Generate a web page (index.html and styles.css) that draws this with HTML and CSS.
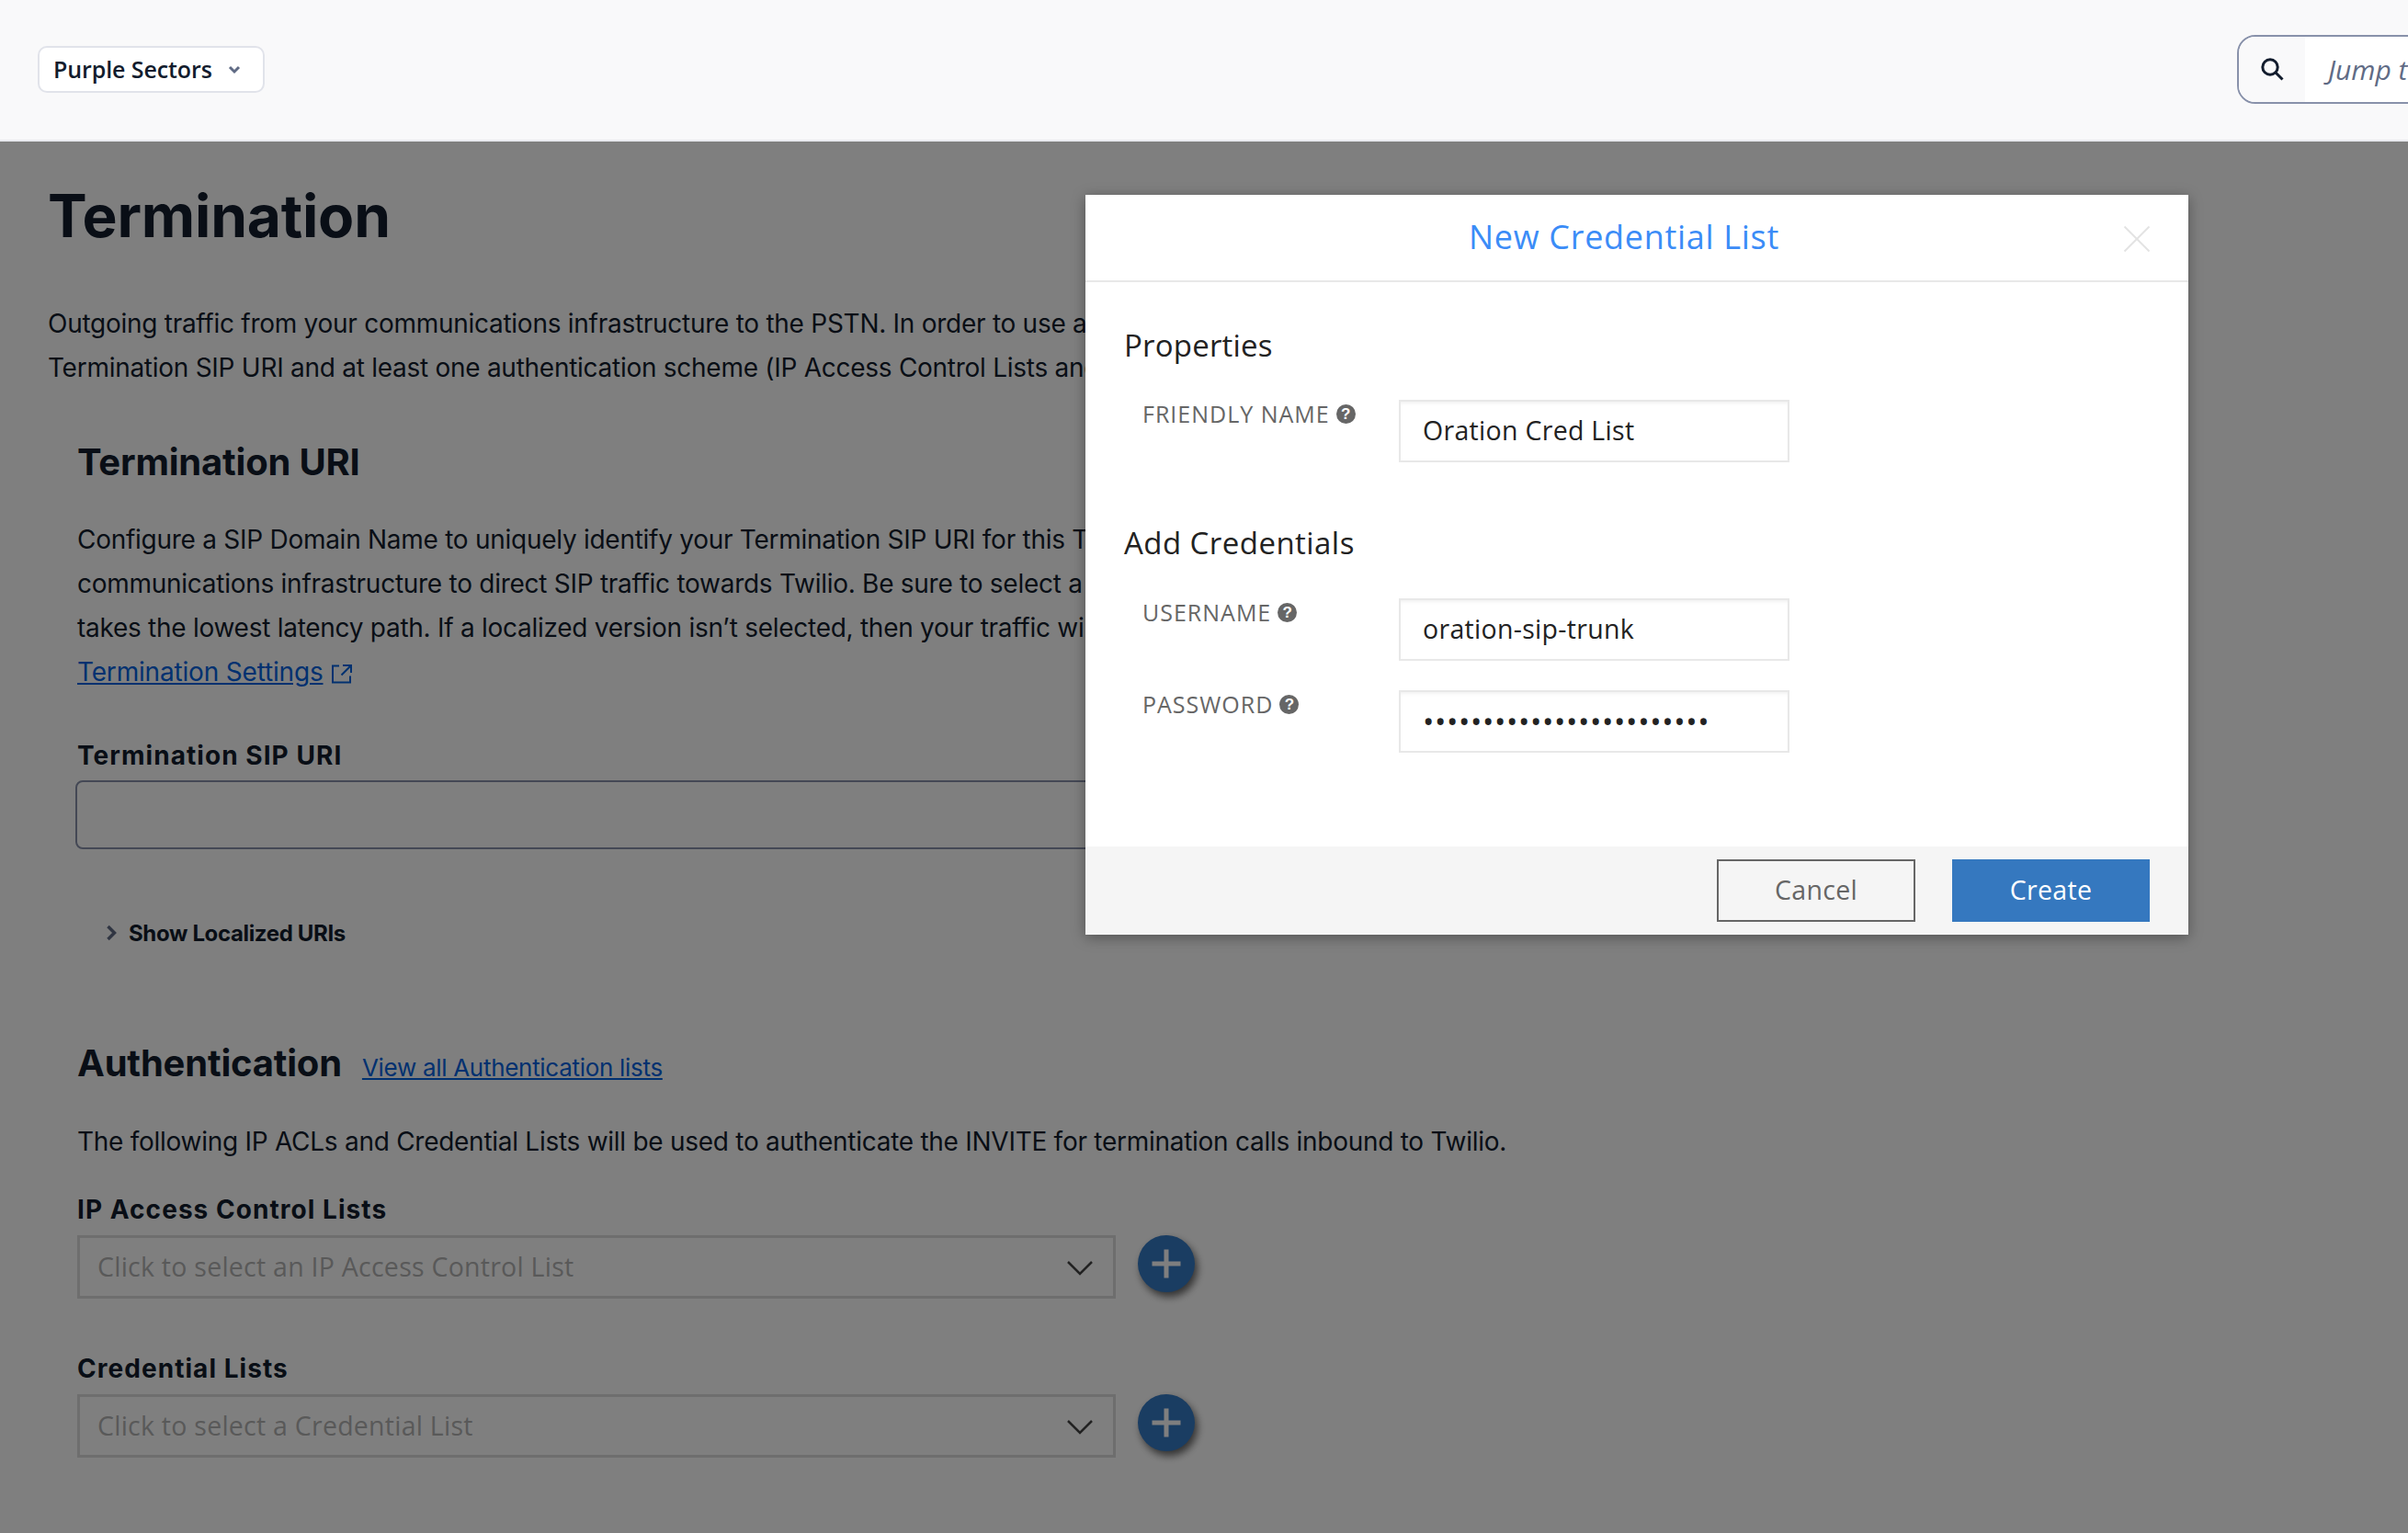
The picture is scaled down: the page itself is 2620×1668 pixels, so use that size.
FILE: index.html
```html
<!DOCTYPE html>
<html lang="en">
<head>
<meta charset="utf-8">
<title>Termination</title>
<link rel="stylesheet" href="styles.css">
</head>
<body>
<header class="topbar">
  <button class="account">Purple Sectors
    <svg class="account-chev" width="14" height="10" viewBox="0 0 14 10"><path d="M2 2l5 5 5-5" fill="none" stroke="#606b85" stroke-width="3"/></svg>
  </button>
  <div class="search">
    <span class="search-icon">
      <svg width="26" height="26" viewBox="0 0 26 26"><circle cx="11" cy="11" r="8.200" fill="none" stroke="#121c2d" stroke-width="3"/><path d="M17 17l7.500 7.500" stroke="#121c2d" stroke-width="3" fill="none"/></svg>
    </span>
    <span class="search-text">Jump t</span>
  </div>
</header>

<main class="content">
  <h1 class="title">Termination</h1>
  <p class="copy intro">Outgoing traffic from your communications infrastructure to the PSTN. In order to use a<br>Termination SIP URI and at least one authentication scheme (IP Access Control Lists and</p>

  <section class="section">
    <h2 class="heading">Termination URI</h2>
    <p class="copy uri-copy">Configure a SIP Domain Name to uniquely identify your Termination SIP URI for this Trunk<br>communications infrastructure to direct SIP traffic towards Twilio. Be sure to select a<br>takes the lowest latency path. If a localized version isn’t selected, then your traffic will<br><a class="link settings-link" href="#">Termination Settings</a> <svg class="ext" width="24" height="24" viewBox="0 0 24 24"><path d="M9 3.500H2v18h19v-7M13 3h9v8M21.500 3.500L11.500 13.500" fill="none" stroke="#0263e0" stroke-width="2"/></svg></p>

    <div class="label sip-label">Termination SIP URI</div>
    <div class="sip-input"></div>

    <div class="disclosure">
      <svg width="12" height="20" viewBox="0 0 12 20"><path d="M2.500 3l7 7-7 7" fill="none" stroke="#606b85" stroke-width="3.500"/></svg>
      <span>Show Localized URIs</span>
    </div>

    <div class="auth-head">
      <h2 class="heading">Authentication</h2>
      <a class="link auth-link" href="#">View all Authentication lists</a>
    </div>
    <p class="copy auth-copy">The following IP ACLs and Credential Lists will be used to authenticate the INVITE for termination calls inbound to Twilio.</p>

    <div class="label acl-label">IP Access Control Lists</div>
    <div class="field-row">
      <div class="select">Click to select an IP Access Control List
        <svg width="30" height="18" viewBox="0 0 30 18"><path d="M2 2l13 13L28 2" fill="none" stroke="#444" stroke-width="2.500"/></svg>
      </div>
      <button class="add"><svg width="32" height="32" viewBox="0 0 32 32"><path d="M16 0.500v31M0.500 16h31" stroke="#fff" stroke-width="5" fill="none"/></svg></button>
    </div>

    <div class="label cred-label">Credential Lists</div>
    <div class="field-row">
      <div class="select">Click to select a Credential List
        <svg width="30" height="18" viewBox="0 0 30 18"><path d="M2 2l13 13L28 2" fill="none" stroke="#444" stroke-width="2.500"/></svg>
      </div>
      <button class="add"><svg width="32" height="32" viewBox="0 0 32 32"><path d="M16 0.500v31M0.500 16h31" stroke="#fff" stroke-width="5" fill="none"/></svg></button>
    </div>
  </section>
</main>

<div class="overlay">
  <div class="modal">
    <div class="modal-head">
      <span class="modal-title">New Credential List</span>
      <svg class="modal-close" width="30" height="30" viewBox="0 0 30 30"><path d="M1.500 1.500l27 27M28.500 1.500l-27 27" stroke="#e3e3e3" stroke-width="2" fill="none"/></svg>
    </div>
    <div class="modal-body">
      <h3 class="group properties">Properties</h3>
      <div class="form-row">
        <label class="form-label">FRIENDLY NAME <span class="help">?</span></label>
        <input class="form-input" type="text" value="Oration Cred List">
      </div>
      <h3 class="group credentials">Add Credentials</h3>
      <div class="form-row">
        <label class="form-label">USERNAME <span class="help">?</span></label>
        <input class="form-input" type="text" value="oration-sip-trunk">
      </div>
      <div class="form-row second">
        <label class="form-label">PASSWORD <span class="help">?</span></label>
        <input class="form-input secret" type="password" value="abcdefghijklmnopqrstuvwx">
      </div>
    </div>
    <div class="modal-foot">
      <button class="btn cancel">Cancel</button>
      <button class="btn create">Create</button>
    </div>
  </div>
</div>
</body>
</html>
```

FILE: styles.css
```css
* { box-sizing: border-box; }
html, body { margin: 0; height: 100%; overflow: hidden; }
body { position: relative; width: 2620px; height: 1668px; background: #fff; color: #121c2d; font-family: "Inter", "Liberation Sans", sans-serif; }

.topbar { height: 154px; background: #f9f9fa; border-bottom: 2px solid #e8e9ee; display: flex; align-items: center; justify-content: space-between; padding-left: 41px; padding-bottom: 2px; overflow: hidden; }
.account { width: 247px; height: 51px; background: #fff; border: 2px solid #e1e3ea; border-radius: 10px; display: flex; align-items: center; padding: 0 0 0 15px; font: 600 25px/1 "Open Sans", sans-serif; color: #121c2d; letter-spacing: -0.1px; }
.account-chev { margin-left: 17px; margin-top: 2px; }
.search { flex: none; width: 500px; margin-right: -314px; height: 75px; border: 2px solid #8891aa; border-radius: 20px; display: flex; overflow: hidden; background: #fff; }
.search-icon { width: 72px; background: #f9f9fa; display: flex; align-items: center; justify-content: center; }
.search-text { padding-left: 25px; font: italic 400 30px/71px "Open Sans", sans-serif; color: #606b85; }

.content { padding: 0 0 0 52px; }
.title { margin: 43px 0 0; font-size: 64px; line-height: 76px; font-weight: 700; letter-spacing: -0.2px; }
.copy { margin: 0; font-size: 28px; line-height: 48px; letter-spacing: -0.27px; white-space: nowrap; }
.intro { margin-top: 55px; }
.section { padding-left: 32px; }
.heading { margin: 0; font-size: 40px; line-height: 48px; font-weight: 700; letter-spacing: -0.2px; }
.section > .heading { margin-top: 55px; }
.uri-copy { margin-top: 36px; }
.link { color: #0263e0; text-decoration: underline; }
.settings-link { letter-spacing: -0.18px; }
.ext { vertical-align: -4px; margin-left: 1px; }
.label { font-size: 28px; line-height: 36px; font-weight: 700; letter-spacing: 1.05px; }
.sip-label { margin-top: 49px; }
.sip-input { margin: 9px 0 0 -2px; width: 1700px; height: 75px; border: 2px solid #8891aa; border-radius: 8px; }
.disclosure { margin-top: 73px; margin-left: 31px; height: 36px; display: flex; align-items: center; gap: 13px; font-size: 24px; font-weight: 700; letter-spacing: -0.35px; }
.auth-head { margin-top: 100px; display: flex; align-items: baseline; gap: 22px; }
.auth-link { font-size: 26px; letter-spacing: -0.3px; }
.auth-copy { margin-top: 37px; }
.acl-label { margin-top: 32px; }
.cred-label { margin-top: 58px; }
.field-row { margin-top: 10px; display: flex; gap: 24px; align-items: flex-start; }
.select { width: 1130px; height: 69px; border: 3px solid #dcdcdc; display: flex; align-items: center; justify-content: space-between; padding: 0 21px 0 19px; font: 400 28.500px/1 "Open Sans", sans-serif; letter-spacing: 0.25px; color: #b3b3b3; }
.select svg { margin-top: 2px; }
.add { width: 62px; height: 62px; padding: 0; border: 0; border-radius: 50%; background: #347ac5; box-shadow: 3px 5px 9px rgba(0,0,0,.6); display: flex; align-items: center; justify-content: center; }

.overlay { position: absolute; top: 154px; left: 0; right: 0; bottom: 0; background: rgba(0,0,0,.5); }
.modal { position: absolute; left: 1181px; top: 58px; width: 1200px; height: 805px; background: #fff; box-shadow: 0 3px 14px rgba(0,0,0,.35); display: flex; flex-direction: column; font-family: "Open Sans", sans-serif; }
.modal-head { position: relative; height: 95px; border-bottom: 2px solid #e8e8e8; display: flex; align-items: center; justify-content: center; padding: 0 28px 2px 0; }
.modal-title { font-size: 36px; letter-spacing: 0.7px; color: #3b8cf7; }
.modal-close { position: absolute; right: 41px; top: 33px; }
.modal-body { padding-left: 42px; }
.group { margin: 0; font-size: 33px; line-height: 40px; font-weight: 400; letter-spacing: 0.2px; color: #222; }
.credentials { letter-spacing: 0.45px; }
.properties { margin-top: 49px; }
.credentials { margin-top: 68px; }
.form-row { margin-top: 39px; display: flex; align-items: flex-start; }
.credentials + .form-row { margin-top: 40px; }
.form-row.second { margin-top: 32px; }
.form-label { width: 299px; padding: 0 0 0 20px; font-size: 25px; line-height: 30px; letter-spacing: 1px; color: #666; display: flex; align-items: center; gap: 7px; }
.help { width: 21px; height: 21px; border-radius: 50%; background: #666; color: #fff; font: 700 17px/21px "Liberation Sans", sans-serif; text-align: center; letter-spacing: 0; }
.form-input { width: 425px; height: 68px; border: 2px solid #e8e8e8; box-shadow: inset 0 3px 4px -2px rgba(0,0,0,.08); padding: 0 24px 2px; font: 400 28.500px "Open Sans", sans-serif; letter-spacing: 0.3px; color: #222; background: #fff; outline: none; border-radius: 0; }
.secret { font-size: 33px; letter-spacing: 0.6px; }
.modal-foot { margin-top: auto; height: 96px; background: #f5f5f5; display: flex; justify-content: flex-end; gap: 40px; padding: 14px 42px 0 0; }
.btn { width: 216px; height: 68px; padding: 0 0 2px; font: 400 28.500px "Open Sans", sans-serif; letter-spacing: 0.3px; border-radius: 0; }
.cancel { background: transparent; border: 2px solid #666; color: #666; }
.create { width: 215px; background: #3578bf; border: 0; color: #fff; }
```
